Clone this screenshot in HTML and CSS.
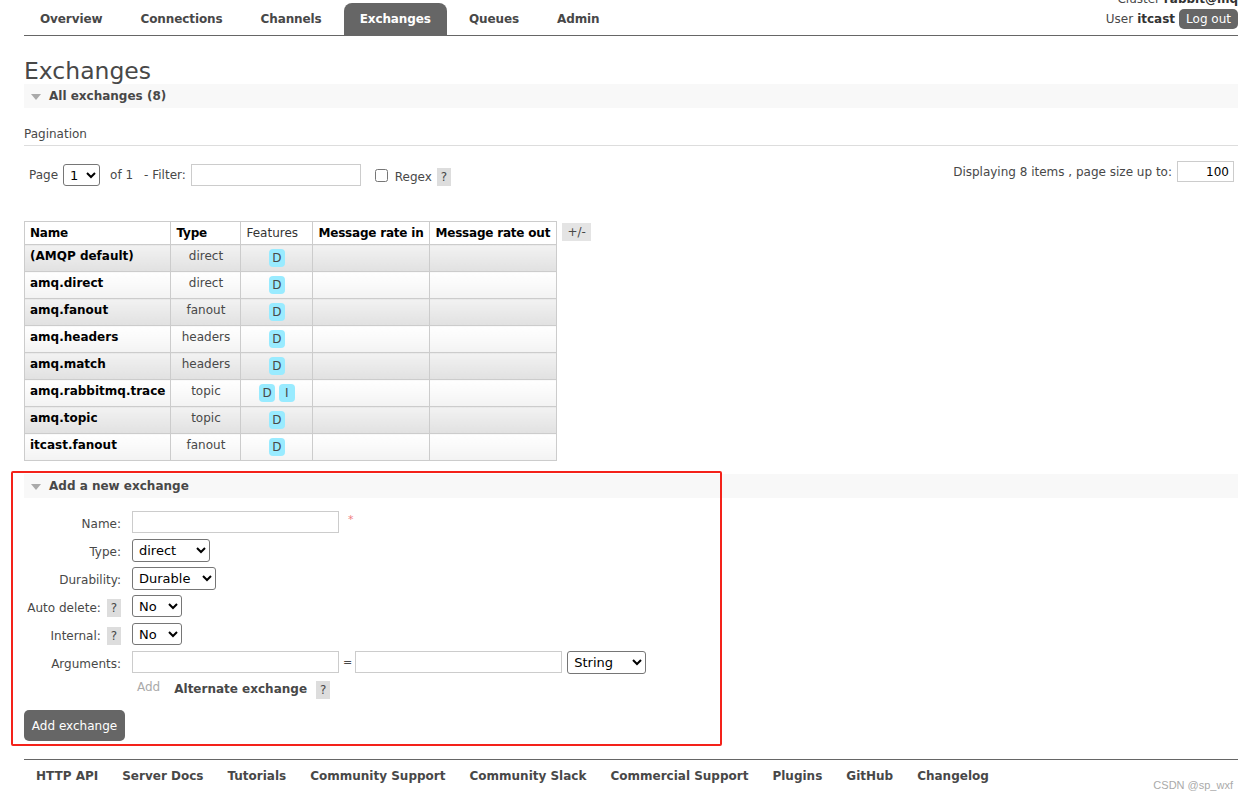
FILE: index.html
```html
<!DOCTYPE html>
<html>
<head>
<meta charset="utf-8">
<title>RabbitMQ Management</title>
<link rel="stylesheet" href="styles.css">
</head>
<body>
<div class="header">
  <ul class="tabs">
    <li><a>Overview</a></li>
    <li><a>Connections</a></li>
    <li><a>Channels</a></li>
    <li class="active"><a>Exchanges</a></li>
    <li><a>Queues</a></li>
    <li><a>Admin</a></li>
  </ul>
  <div class="login">
    <div class="cluster">Cluster <b>rabbit@mq</b></div>
    <div class="user">User <b>itcast</b> <span class="logout">Log out</span></div>
  </div>
</div>

<div class="main">
  <h1>Exchanges</h1>
  <h2 class="section-title">All exchanges (8)</h2>
  <h3 class="sub">Pagination</h3>
  <div class="pager">
    <div class="pager-left">
      <span class="pg">Page</span>
      <select class="sel sel-page"><option>1</option></select>
      <span class="of">of 1</span>
      <span class="flt">- Filter:</span>
      <input class="txt filter" type="text">
      <input class="chk" type="checkbox">
      <span class="rgx">Regex</span>
      <span class="help">?</span>
    </div>
    <div class="pager-right">
      <span>Displaying 8 items , page size up to:</span>
      <input class="txt size" type="text" value="100">
    </div>
  </div>

  <div class="table-wrap">
    <table class="list">
      <thead>
        <tr>
          <th class="c-name">Name</th>
          <th class="c-type">Type</th>
          <th class="c-feat plain">Features</th>
          <th class="c-in">Message rate in</th>
          <th class="c-out">Message rate out</th>
        </tr>
      </thead>
      <tbody>
        <tr class="alt1"><td class="name">(AMQP default)</td><td class="type">direct</td><td class="feat"><span class="badge">D</span></td><td></td><td></td></tr>
        <tr class="alt2"><td class="name">amq.direct</td><td class="type">direct</td><td class="feat"><span class="badge">D</span></td><td></td><td></td></tr>
        <tr class="alt1"><td class="name">amq.fanout</td><td class="type">fanout</td><td class="feat"><span class="badge">D</span></td><td></td><td></td></tr>
        <tr class="alt2"><td class="name">amq.headers</td><td class="type">headers</td><td class="feat"><span class="badge">D</span></td><td></td><td></td></tr>
        <tr class="alt1"><td class="name">amq.match</td><td class="type">headers</td><td class="feat"><span class="badge">D</span></td><td></td><td></td></tr>
        <tr class="alt2"><td class="name">amq.rabbitmq.trace</td><td class="type">topic</td><td class="feat"><span class="badge">D</span> <span class="badge">I</span></td><td></td><td></td></tr>
        <tr class="alt1"><td class="name">amq.topic</td><td class="type">topic</td><td class="feat"><span class="badge">D</span></td><td></td><td></td></tr>
        <tr class="alt2"><td class="name">itcast.fanout</td><td class="type">fanout</td><td class="feat"><span class="badge">D</span></td><td></td><td></td></tr>
      </tbody>
    </table>
    <span class="toggle">+/-</span>
  </div>

  <h2 class="section-title add-title">Add a new exchange</h2>
  <div class="form">
    <div class="row">
      <label class="lbl">Name:</label>
      <input class="txt arg" type="text">
      <span class="req">*</span>
    </div>
    <div class="row">
      <label class="lbl">Type:</label>
      <select class="sel sel-type"><option>direct</option></select>
    </div>
    <div class="row">
      <label class="lbl">Durability:</label>
      <select class="sel sel-dur"><option>Durable</option></select>
    </div>
    <div class="row">
      <label class="lbl">Auto delete: <span class="help">?</span></label>
      <select class="sel sel-no"><option>No</option></select>
    </div>
    <div class="row">
      <label class="lbl">Internal: <span class="help">?</span></label>
      <select class="sel sel-no"><option>No</option></select>
    </div>
    <div class="row">
      <label class="lbl">Arguments:</label>
      <input class="txt arg" type="text">
      <span class="eq">=</span>
      <input class="txt arg" type="text">
      <select class="sel sel-str"><option>String</option></select>
    </div>
    <div class="row add-row">
      <span class="lbl"></span>
      <span class="add">Add</span>
      <b class="alt">Alternate exchange</b>
      <span class="help">?</span>
    </div>
    <button class="btn">Add exchange</button>
  </div>
</div>

<div class="footer">
  <a>HTTP API</a>
  <a>Server Docs</a>
  <a>Tutorials</a>
  <a>Community Support</a>
  <a>Community Slack</a>
  <a>Commercial Support</a>
  <a>Plugins</a>
  <a>GitHub</a>
  <a>Changelog</a>
</div>

<div class="highlight"></div>
<div class="watermark">CSDN @sp_wxf</div>
</body>
</html>
```

FILE: styles.css
```css
html, body {
  margin: 0;
  padding: 0;
  background: #fff;
}
body {
  font-family: "DejaVu Sans", Verdana, sans-serif;
  font-size: 12px;
  color: #484848;
  position: relative;
  min-height: 801px;
  overflow: hidden;
}

/* header */
.header {
  margin: 0 10px 0 24px;
  height: 35px;
  border-bottom: 1px solid #666;
  display: flex;
  justify-content: space-between;
  align-items: flex-end;
}
.tabs {
  list-style: none;
  margin: 0;
  padding: 0;
  display: flex;
  gap: 6px;
}
.tabs a {
  display: block;
  height: 32px;
  line-height: 33px;
  padding: 0 16px;
  font-weight: bold;
  font-size: 12px;
  color: #484848;
  letter-spacing: -0.1px;
}
.tabs .active a {
  background: #666;
  color: #fff;
  border-radius: 8px 8px 0 0;
}
.login {
  align-self: stretch;
  display: flex;
  flex-direction: column;
  justify-content: flex-end;
  align-items: flex-end;
  padding-bottom: 6px;
}
.cluster {
  line-height: 14px;
  margin-bottom: 3px;
}
.cluster b, .user b { color: #333; }
.user {
  display: flex;
  align-items: center;
  gap: 4px;
  height: 20px;
}
.logout {
  display: inline-block;
  background: #666;
  color: #fff;
  border-radius: 5px;
  height: 20px;
  line-height: 20px;
  padding: 0 7px;
}

/* main */
.main {
  padding: 0 10px 0 24px;
}
h1 {
  font-size: 23.5px;
  font-weight: normal;
  line-height: 28px;
  margin: 21px 0 0;
  height: 27px;
  color: #484848;
}
.section-title {
  position: relative;
  margin: 0;
  height: 24px;
  line-height: 25px;
  background: #f8f8f8;
  font-size: 12px;
  font-weight: bold;
  padding-left: 25px;
  color: #484848;
}
.section-title::before {
  content: "";
  position: absolute;
  left: 7px;
  top: 10px;
  border-left: 5px solid transparent;
  border-right: 5px solid transparent;
  border-top: 6px solid #aaa;
}
.sub {
  margin: 19px 0 0;
  font-size: 12px;
  font-weight: normal;
  line-height: 14px;
  padding-bottom: 4px;
  border-bottom: 1px solid #ddd;
}
.pager {
  margin-top: 18px;
  display: flex;
  justify-content: space-between;
  align-items: flex-start;
}
.pager-left {
  display: flex;
  align-items: center;
  padding-left: 5px;
  height: 22px;
}
.pg { margin-right: 5px; }
.of { margin: 0 11px 0 10px; }
.flt { margin-right: 5px; }
.rgx { margin: 3px 5px 0 0; }
.pager-right {
  display: flex;
  align-items: center;
  margin-top: -3px;
  margin-right: 4px;
  gap: 5px;
}
.sel {
  font-family: "DejaVu Sans", Verdana, sans-serif;
  font-size: 13px;
  color: #000;
  height: 23px;
  border: 1px solid #767676;
  border-radius: 3px;
  background: #fff;
  padding: 0 2px;
}
.sel-page { width: 37px; height: 22px; }
.txt {
  font-family: "DejaVu Sans", Verdana, sans-serif;
  font-size: 12px;
  border: 1px solid #ccc;
  height: 22px;
  box-sizing: border-box;
  padding: 0 4px;
  margin: 0;
}
.filter { width: 170px; margin-right: 14px; }
.size { width: 57px; height: 21px; text-align: right; color: #000; }
.chk { width: 13px; height: 13px; margin: 0 7px 0 0; }
.help {
  display: inline-block;
  background: #ddd;
  color: #484848;
  padding: 0 4px;
  line-height: 18px;
  font-size: 12px;
}
.pager-left .help { margin-top: 4px; }

/* table */
.table-wrap {
  margin-top: 35px;
  display: flex;
  align-items: flex-start;
  gap: 5px;
}
.list {
  border-collapse: collapse;
  border: 1px solid #ccc;
}
.list th, .list td {
  border: 1px solid #ccc;
  font-size: 12px;
}
.list th {
  background: #fff;
  font-weight: bold;
  color: #000;
  height: 22px;
  padding: 0 5px;
  text-align: left;
  white-space: nowrap;
  letter-spacing: -0.2px;
}
.list th.plain { font-weight: normal; color: #333; letter-spacing: 0; }
.c-name { width: 135px; }
.c-type { width: 59px; }
.c-feat { width: 61px; }
.c-in { width: 106px; }
.c-out { width: 116px; }
.list td {
  height: 27px;
  padding: 0 5px;
  vertical-align: top;
  line-height: 20px;
  padding-top: 1px;
  box-sizing: border-box;
}
.list td.name { font-weight: bold; color: #000; white-space: nowrap; }
.list td.type { text-align: center; }
.list td.feat { text-align: center; padding-top: 3px; }
.alt1 td { background: linear-gradient(#f2f2f2, #e1e1e1); }
.alt2 td { background: linear-gradient(#ffffff, #f3f3f3); }
.badge {
  display: inline-block;
  background: #99ebff;
  border-radius: 4px;
  padding: 0 3px;
  line-height: 18px;
  min-width: 10px;
  color: #484848;
}
.toggle {
  margin-top: 2px;
  display: inline-block;
  background: #e4e4e4;
  padding: 0 5px;
  line-height: 18px;
}

/* form */
.add-title { margin-top: 13px; }
.form { padding-top: 13px; }
.row {
  display: flex;
  align-items: center;
  height: 22px;
  margin-bottom: 6px;
}
.lbl {
  width: 97px;
  margin-right: 11px;
  text-align: right;
  white-space: nowrap;
  padding-top: 3px;
}
.lbl .help { margin-left: 2px; }
.arg { width: 207px; }
.req { color: #f08080; margin-left: 9px; margin-top: -6px; font-size: 11px; }
.eq { margin: 0 3px 0 4px; font-size: 11px; }
.sel-type { width: 78px; }
.sel-dur { width: 84px; }
.sel-no { width: 50px; height: 22px; }
.sel-str { width: 79px; margin-left: 5px; }
.add-row { margin-bottom: 9px; }
.add { color: #aaa; margin-left: 5px; margin-right: 14px; margin-top: -6px; }
.alt { color: #484848; margin-right: 9px; margin-top: -2px; }
.btn {
  display: block;
  background: #666;
  color: #fff;
  border: none;
  border-radius: 5px;
  font-family: "DejaVu Sans", Verdana, sans-serif;
  font-size: 12px;
  height: 31px;
  padding: 0;
  width: 101px;
  white-space: nowrap;
}

/* footer */
.footer {
  margin: 18px 10px 0 24px;
  border-top: 1px solid #666;
  display: flex;
  height: 32px;
  align-items: center;
}
.footer a {
  padding: 0 12px;
  font-weight: bold;
  color: #484848;
}

/* overlays */
.highlight {
  position: absolute;
  left: 11px;
  top: 471px;
  width: 707px;
  height: 271px;
  border: 2px solid #f4221a;
  border-radius: 2px;
  pointer-events: none;
}
.watermark {
  position: absolute;
  right: 15px;
  top: 779px;
  font-family: "Liberation Sans", Arial, sans-serif;
  font-size: 11px;
  color: #aaa;
}
```
